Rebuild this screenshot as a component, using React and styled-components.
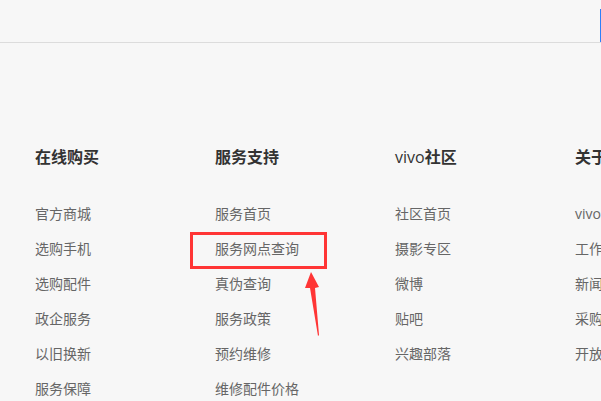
import React from "react";
import styled, { createGlobalStyle } from "styled-components";

const Global = createGlobalStyle`
  html, body { margin: 0; padding: 0; background: #f7f7f7; }
  body { font-family: "Noto Sans CJK SC", "Microsoft YaHei", sans-serif; }
`;

const Page = styled.div`
  width: 601px;
  height: 401px;
  overflow: hidden;
  background: #f7f7f7;
`;

const Header = styled.div`
  height: 42px;
  border-bottom: 1px solid #dcdcdc;
  display: flex;
  justify-content: flex-end;
  align-items: flex-end;
`;

const SearchEdge = styled.div`
  width: 0;
  height: 33px;
  border-left: 2px solid #2d7ff9;
  margin-right: -1px;
`;

const Columns = styled.div`
  display: grid;
  grid-template-columns: repeat(4, 180px);
  padding-left: 35px;
  padding-top: 102px;
`;

const Column = styled.div`
  display: flex;
  flex-direction: column;
  white-space: nowrap;
`;

const Heading = styled.h3`
  margin: 0;
  height: 22px;
  line-height: 22px;
  font-size: 16px;
  font-weight: 700;
  color: #333;
  margin-bottom: 29px;
`;

const Latin = styled.span`
  font-family: "Open Sans", "Noto Sans", sans-serif;
  font-weight: 400;
`;

const List = styled.ul`
  list-style: none;
  margin: 0;
  padding: 0;
`;

const Item = styled.li`
  position: relative;
  height: 35px;
  line-height: 35px;
  font-size: 14px;
  color: #666;
`;

const Highlight = styled.span`
  position: absolute;
  left: -25px;
  top: 1px;
  width: 131px;
  height: 31px;
  border: 3px solid #ff3535;
  pointer-events: none;
`;

const Arrow = styled.svg`
  position: absolute;
  left: 90px;
  top: 41px;
  overflow: visible;
`;

const columns = [
  { title: "在线购买", items: ["官方商城", "选购手机", "选购配件", "政企服务", "以旧换新", "服务保障"] },
  { title: "服务支持", items: ["服务首页", "服务网点查询", "真伪查询", "服务政策", "预约维修", "维修配件价格"] },
  { title: <><Latin>vivo</Latin>社区</>, items: ["社区首页", "摄影专区", "微博", "贴吧", "兴趣部落"] },
  { title: <>关于<Latin>vivo</Latin></>, items: [<><Latin>vivo</Latin>简介</>, "工作机会", "新闻中心", "采购平台", "开放平台"] },
];

export default function App() {
  return (
    <Page>
      <Global />
      <Header>
        <SearchEdge />
      </Header>
      <Columns>
        {columns.map((col, ci) => (
          <Column key={ci}>
            <Heading>{col.title}</Heading>
            <List>
              {col.items.map((it, ii) => (
                <Item key={ii}>
                  {it}
                  {ci === 1 && ii === 1 && (
                    <>
                      <Highlight />
                      <Arrow width="20" height="70" viewBox="0 0 20 70">
                        <path d="M6 0 L14 15 L10 16 L14 63 L13 64 L5 16 L0 16 Z" fill="#ff3535" />
                      </Arrow>
                    </>
                  )}
                </Item>
              ))}
            </List>
          </Column>
        ))}
      </Columns>
    </Page>
  );
}
